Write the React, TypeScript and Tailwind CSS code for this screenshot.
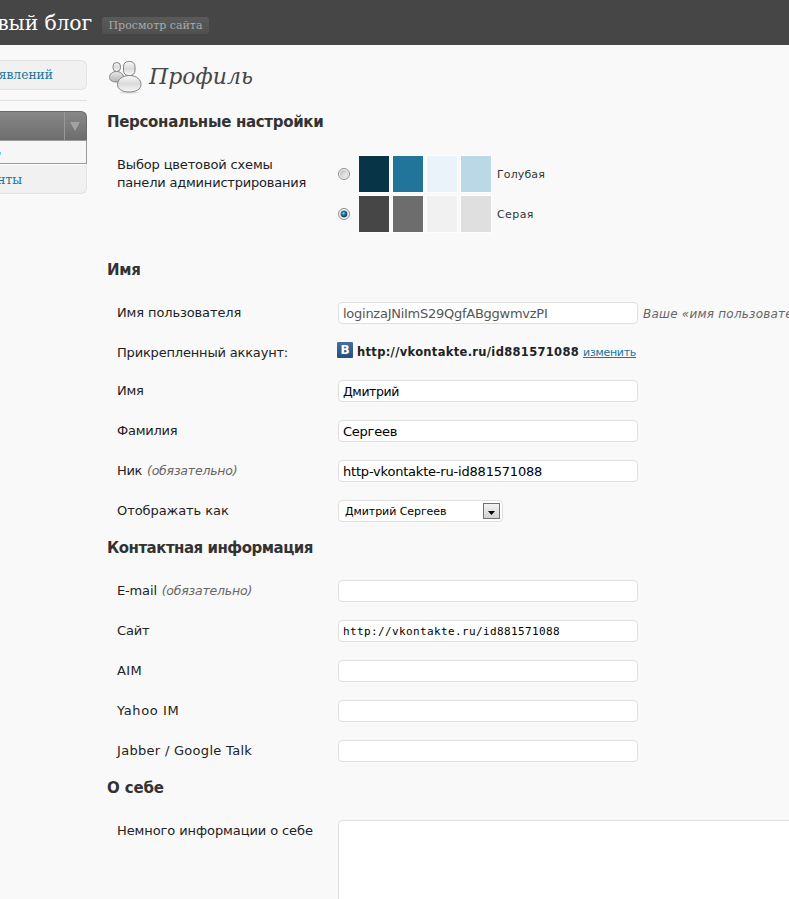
import React from "react";

const SANS = "font-['DejaVu_Sans','Liberation_Sans',sans-serif]";
const SERIF = "font-['DejaVu_Serif','Liberation_Serif',serif]";

function Heading({ children, className }: { children: React.ReactNode; className: string }) {
  return <h3 className={`flex items-center text-[15px] font-bold leading-[20px] text-[#333] ${className}`}>{children}</h3>;
}

function Row({
  label,
  spacing = "",
  required,
  height = "h-10",
  children,
}: {
  label: string;
  spacing?: string;
  required?: boolean;
  height?: string;
  children: React.ReactNode;
}) {
  return (
    <div className={`flex items-center ${height}`}>
      <label className="w-[231px] shrink-0 whitespace-nowrap pl-[10px] text-[13px] leading-[18px] text-[#222]">
        <span className={spacing}>{label}</span>
        {required && <span className="ml-px text-[12.5px] italic tracking-[-0.2px] text-[#666]"> (обязательно)</span>}
      </label>
      {children}
    </div>
  );
}

function Field({ value = "", className = "text-[13px] text-black" }: { value?: string; className?: string }) {
  return (
    <input
      type="text"
      defaultValue={value}
      className={`h-[22px] w-[300px] shrink-0 rounded-[4px] border border-[#dfdfdf] bg-white px-1 outline-none ${className}`}
    />
  );
}

function Swatches({ colors }: { colors: string[] }) {
  return (
    <div className="ml-[7px] flex gap-[2px]">
      {colors.map((c) => (
        <span key={c} className={`h-[38px] w-8 border border-[#fdfdfd] ${c}`} />
      ))}
    </div>
  );
}

function Radio({ checked }: { checked?: boolean }) {
  return (
    <svg width="13" height="13" viewBox="0 0 13 13" className="shrink-0">
      <defs>
        <linearGradient id="radioFill" x1="0" y1="0" x2="1" y2="1">
          <stop offset="0" stopColor="#b8bcc0" />
          <stop offset="1" stopColor="#fafafa" />
        </linearGradient>
        <radialGradient id="radioDot" cx=".42" cy=".4" r=".6">
          <stop offset="0" stopColor="#6fd3f5" />
          <stop offset=".5" stopColor="#1878a8" />
          <stop offset="1" stopColor="#0b2f4e" />
        </radialGradient>
      </defs>
      <circle cx="6" cy="6" r="5.5" fill="#f6f6f6" stroke="#8c8c8c" />
      <circle cx="6" cy="6" r="3.8" fill="url(#radioFill)" stroke="#c4c6c8" strokeWidth=".6" />
      {checked && <circle cx="6" cy="6" r="3.2" fill="url(#radioDot)" />}
    </svg>
  );
}

function UsersIcon() {
  return (
    <svg width="35" height="34" viewBox="-1 0 35 34" className="shrink-0">
      <defs>
        <linearGradient id="userFill" x1="0" y1="0" x2="0" y2="1">
          <stop offset="0" stopColor="#fafafa" />
          <stop offset=".5" stopColor="#dadada" />
          <stop offset="1" stopColor="#f8f8f8" />
        </linearGradient>
        <linearGradient id="userBack" x1="0" y1="0" x2="0" y2="1">
          <stop offset="0" stopColor="#e8e8e8" />
          <stop offset="1" stopColor="#b5b5b5" />
        </linearGradient>
      </defs>
      <ellipse cx="21" cy="32.500" rx="10" ry="1.2" fill="#dcdcdc" />
      <g stroke="#828282" strokeWidth="1">
        <path d="M1.500 17.500C1.500 14 4.500 11.500 8.500 11.500s7 2.500 7 6c0 3-3 4.500-7 4.500s-7-1.500-7-4.500z" fill="url(#userBack)" />
        <rect x="5" y="2.500" width="7.500" height="9" rx="3.750" fill="url(#userFill)" />
        <path d="M9.500 24.500C9.500 19.500 14.500 15.500 21.500 15.500s11.500 4 11.500 9c0 4.700-5 7.500-11.700 7.500S9.500 29.200 9.500 24.500z" fill="url(#userFill)" />
        <rect x="15.500" y="1.500" width="11.500" height="14" rx="4.800" fill="url(#userFill)" />
      </g>
    </svg>
  );
}

function Sidebar() {
  return (
    <aside className={`h-[854px] w-[87px] shrink-0 overflow-hidden pt-[15px] text-[12.3px] text-[#21759b] ${SERIF}`}>
      <div className="flex h-[30px] w-full items-center justify-end rounded-r-[6px] border border-l-0 border-[#e3e3e3] bg-[#f1f1f1] pr-[33px]">
        <span className="mt-px whitespace-nowrap">явлений</span>
      </div>
      <div className="mt-[10px] h-px bg-[#dfdfdf]" />
      <div className="mt-[10px] flex h-[29px] justify-end rounded-tr-[6px] border-r border-t border-[#6a6a6a] bg-linear-to-b from-[#888] to-[#6d6d6d]">
        <span className="flex w-[22px] items-center justify-center border-l border-[#999]">
          <svg width="10" height="9" viewBox="0 0 10 9" className="mr-[2px] mt-px">
            <path d="M0 0h10L5 9z" fill="#a2a2a2" />
          </svg>
        </span>
      </div>
      <div className="flex h-[24px] items-center justify-end border border-l-0 border-[#999] bg-[#f6f6f6] pr-[85px]">
        <span className="text-[11px] leading-[18px] text-[#3f9fdc]">ь</span>
      </div>
      <div className="flex h-[30px] items-center justify-end rounded-br-[6px] border border-l-0 border-[#e3e3e3] border-t-[#fff] bg-[#f1f1f1] pr-[64px]">
        <span className="mt-[2px] whitespace-nowrap">нты</span>
      </div>
    </aside>
  );
}

export default function App() {
  return (
    <div className={`h-[899px] w-[789px] overflow-hidden bg-[#f9f9f9] ${SANS}`}>
      <header className={`flex h-[45px] items-center bg-[#464646] ${SERIF}`}>
        <div className="flex w-[92px] shrink-0 justify-end">
          <h1 className="whitespace-nowrap text-[20.4px] leading-[30px] tracking-[-0.15px] text-white">вый блог</h1>
        </div>
        <button className="ml-[10px] mt-[6px] flex h-[17px] w-[107px] items-center justify-center whitespace-nowrap rounded-[3px] bg-linear-to-b from-[#5a5a5a] to-[#505050] text-[11px] leading-none text-[#aaa]">
          Просмотр сайта
        </button>
      </header>

      <div className="flex">
        <Sidebar />
        <main className="ml-5 w-[682px] shrink-0">
          <div className="flex h-[55px] items-start pt-[15px]">
            <UsersIcon />
            <h2 className={`ml-[7px] text-[22px] italic leading-[34px] text-[#464646] ${SERIF}`}>Профиль</h2>
          </div>

          <Heading className="h-[44px] tracking-[-0.31px]">Персональные настройки</Heading>
          <div className="flex h-[104px]">
            <div className="w-[231px] pl-[10px] pt-[12px] text-[13px] leading-[18px] text-[#222]">
              <span className="tracking-[-0.15px]">Выбор цветовой схемы</span>
              <br />
              <span className="tracking-[-0.2px]">панели администрирования</span>
            </div>
            <div className="flex flex-col gap-[2px] pt-[11px] text-[11px] text-[#333]">
              <div className="flex h-[38px] items-center">
                <Radio />
                <Swatches colors={["bg-[#073447]", "bg-[#21759b]", "bg-[#eaf3fa]", "bg-[#bbd8e7]"]} />
                <span className="ml-[5px] mt-[3px] tracking-[0.12px]">Голубая</span>
              </div>
              <div className="flex h-[38px] items-center">
                <Radio checked />
                <Swatches colors={["bg-[#464646]", "bg-[#6d6d6d]", "bg-[#f1f1f1]", "bg-[#dfdfdf]"]} />
                <span className="ml-[5px] mt-[3px] tracking-[0.4px]">Серая</span>
              </div>
            </div>
          </div>

          <Heading className="h-[44px] tracking-[-0.3px]">Имя</Heading>
          <Row label="Имя пользователя" spacing="tracking-[-0.12px]" height="h-[42px]">
            <Field value="loginzaJNiImS29QgfABggwmvzPI" className="text-[13px] tracking-[-0.26px] text-[#555]" />
            <span className="ml-[5px] mt-px whitespace-nowrap text-[12px] italic tracking-[0.22px] text-[#666]">
              Ваше «имя пользователя» нельзя изменить.
            </span>
          </Row>
          <Row label="Прикрепленный аккаунт:" spacing="tracking-[-0.18px]" height="h-[37px]">
            <span className="-ml-px mb-[5px] flex h-4 w-4 shrink-0 items-center justify-center rounded-[1px] bg-linear-to-b from-[#42719f] to-[#245080] text-[12px] font-bold leading-none text-white">
              В
            </span>
            <strong className="ml-1 mt-px text-[11.5px] tracking-[0.32px] text-[#222]">http://vkontakte.ru/id881571088</strong>
            <a className="ml-1 mt-[2px] text-[11px] tracking-[-0.3px] text-[#21759b] underline">изменить</a>
          </Row>
          <Row label="Имя" spacing="tracking-[-0.3px]">
            <Field value="Дмитрий" className="text-[12.5px] tracking-[-0.4px] text-black" />
          </Row>
          <Row label="Фамилия" spacing="tracking-[-0.25px]">
            <Field value="Сергеев" className="text-[13px] tracking-[-0.25px] text-black" />
          </Row>
          <Row label="Ник" spacing="tracking-[-0.3px]" required>
            <Field value="http-vkontakte-ru-id881571088" className="text-[13px] tracking-[-0.2px] text-black" />
          </Row>
          <Row label="Отображать как" spacing="tracking-[-0.07px]">
            <div className="flex h-[22px] w-[165px] items-center justify-between rounded-[4px] border border-[#dfdfdf] bg-white pl-[6px] pr-[2px] text-[11px] text-black">
              <span className="mt-[2px] tracking-[-0.07px]">Дмитрий Сергеев</span>
              <span className="flex h-4 w-[17px] items-center justify-center border border-[#707070] bg-linear-to-b from-[#f2f2f2] to-[#d2d2d2]">
                <svg width="7" height="4" viewBox="0 0 7 4" className="mt-[3px]">
                  <path d="M0 0h7L3.500 4z" fill="#000" />
                </svg>
              </span>
            </div>
          </Row>

          <Heading className="h-10 pb-[6px] tracking-[-0.5px]">Контактная информация</Heading>
          <Row label="E-mail" spacing="tracking-[-0.15px]" required>
            <Field />
          </Row>
          <Row label="Сайт" spacing="tracking-[-0.2px]">
            <Field
              value="http://vkontakte.ru/id881571088"
              className="font-['DejaVu_Sans_Mono',monospace] text-[11px] tracking-[0.38px] text-black"
            />
          </Row>
          <Row label="AIM" spacing="tracking-[0.4px]">
            <Field />
          </Row>
          <Row label="Yahoo IM" spacing="tracking-[0.6px]">
            <Field />
          </Row>
          <Row label="Jabber / Google Talk" spacing="tracking-[0.3px]">
            <Field />
          </Row>

          <Heading className="h-10 pb-[6px] tracking-[-0.15px]">О себе</Heading>
          <div className="flex pt-[9px]">
            <label className="w-[231px] shrink-0 pl-[10px] pt-[2px] text-[13px] leading-[18px] tracking-[-0.09px] text-[#222]">
              Немного информации о себе
            </label>
            <textarea className="h-[120px] w-[500px] shrink-0 resize-none rounded-[4px] border border-[#dfdfdf] bg-white outline-none" />
          </div>
        </main>
      </div>
    </div>
  );
}
